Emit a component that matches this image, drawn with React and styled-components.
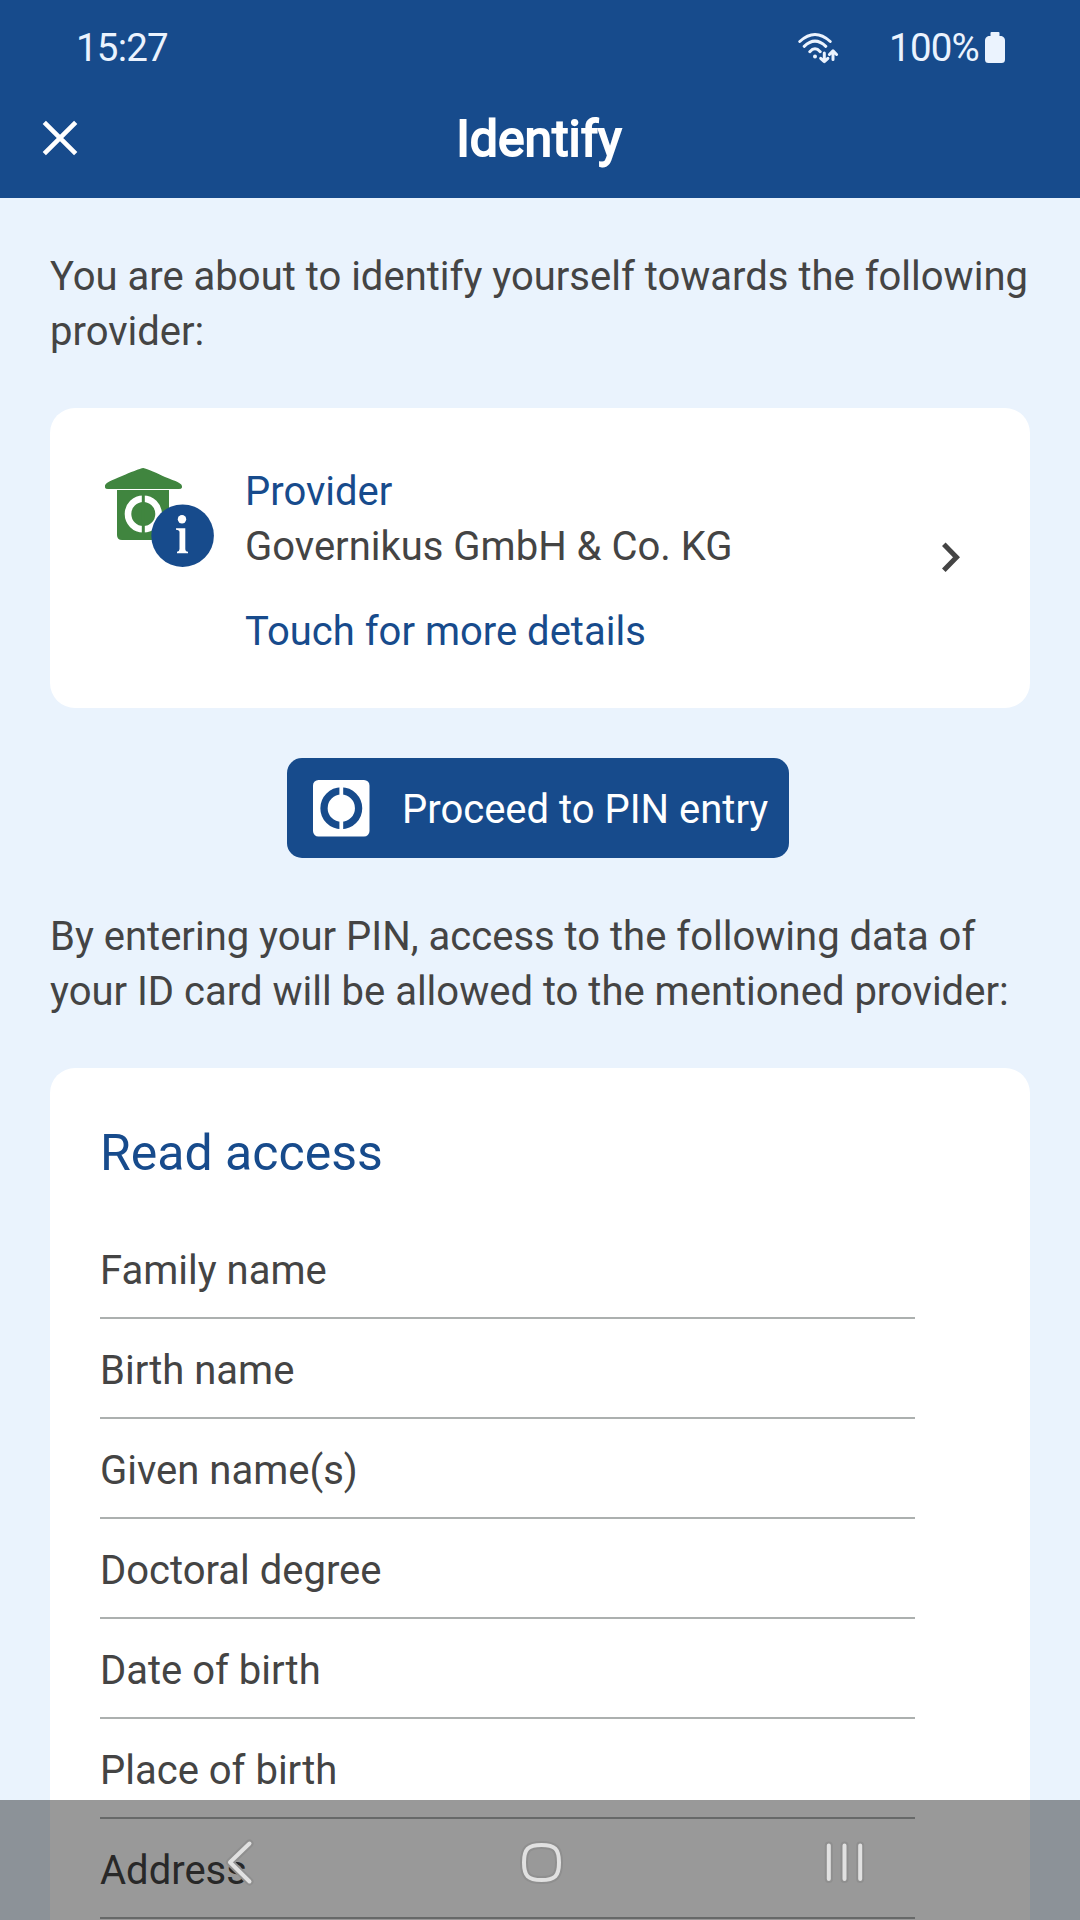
import React from "react";
import styled, { createGlobalStyle } from "styled-components";

const blue = "#174b8c";
const ink = "#444444";

const GlobalStyle = createGlobalStyle`
  * { box-sizing: border-box; }
  body {
    margin: 0;
    font-family: Roboto, "Noto Sans", sans-serif;
    background: #eaf3fd;
    overflow: hidden;
  }
`;

const Screen = styled.div`
  position: relative;
  display: flex;
  flex-direction: column;
  width: 1080px;
  height: 1920px;
  overflow: hidden;
  color: ${ink};
  font-size: 40px;
  line-height: 55px;
`;

const Header = styled.header`
  flex: none;
  height: 198px;
  background: ${blue};
  color: #fff;
`;

const StatusBar = styled.div`
  display: flex;
  align-items: center;
  height: 95px;
  padding: 0 75px 0 76px;
  color: #ebf3fe;
  font-size: 38.5px;
  letter-spacing: -0.8px;
`;

const Clock = styled.span`
  margin-right: auto;
`;

const Percent = styled.span`
  margin-left: 50px;
  margin-right: 6px;
`;

const TitleBar = styled.div`
  display: grid;
  grid-template-columns: 120px 1fr 120px;
  align-items: center;
  height: 86px;
`;

const CloseButton = styled.button`
  display: flex;
  width: 36px;
  height: 36px;
  margin-left: 42px;
  padding: 0;
  border: 0;
  background: none;
`;

const Title = styled.h1`
  margin: 0;
  padding: 2px 2px 0 0;
  text-align: center;
  font-size: 50px;
  font-weight: 400;
  -webkit-text-stroke: 2px #fff;
`;

const Content = styled.main`
  display: flex;
  flex-direction: column;
  flex: 1;
  min-height: 0;
  gap: 50px;
  padding: 50px 50px 0;
`;

const Paragraph = styled.p`
  flex: none;
  height: 110px;
  margin: 0;
  padding-top: 1px;
  white-space: nowrap;
`;

const Card = styled.section`
  flex: none;
  border-radius: 25px;
  background: #fff;
`;

const ProviderCard = styled(Card)`
  display: flex;
  height: 300px;
  padding: 56px 69px 0 50px;
`;

const ProviderIcon = styled.svg`
  flex: none;
  width: 120px;
  height: 110px;
  margin-right: 25px;
`;

const ProviderText = styled.div`
  display: flex;
  flex-direction: column;
  flex: 1;
`;

const Accent = styled.span`
  color: ${blue};
`;

const DetailsLink = styled(Accent)`
  margin-top: 30px;
`;

const Chevron = styled.svg`
  flex: none;
  width: 20px;
  height: 32px;
  margin-top: 77px;
`;

const PinButton = styled.button`
  display: flex;
  flex: none;
  align-self: center;
  align-items: center;
  width: 502px;
  height: 100px;
  margin-right: 4px;
  padding: 0 0 0 26px;
  border: 0;
  border-radius: 15px;
  background: ${blue};
  color: #fff;
  font: inherit;
  white-space: nowrap;
`;

const ButtonIcon = styled.svg`
  flex: none;
  width: 57px;
  height: 57px;
  margin-right: 32px;
`;

const ButtonLabel = styled.span`
  padding-top: 2px;
`;

const AccessCard = styled(Card)`
  padding: 50px 115px 50px 50px;
`;

const CardTitle = styled.h2`
  margin: 0;
  padding: 1px 0 31px;
  color: ${blue};
  font-size: 50px;
  font-weight: 400;
  line-height: 69px;
`;

const AccessList = styled.ul`
  margin: 0;
  padding: 0;
  list-style: none;
`;

const AccessRow = styled.li`
  display: flex;
  align-items: center;
  height: 100px;
  padding-top: 4px;
  border-bottom: 2px solid #acb0af;
`;

const NavBar = styled.nav`
  position: absolute;
  left: 0;
  right: 0;
  bottom: 0;
  height: 120px;
  background: rgba(0, 0, 0, 0.4);
`;

const NavIcons = styled.svg`
  display: block;
  width: 1080px;
  height: 120px;
`;

const fields = [
  "Family name",
  "Birth name",
  "Given name(s)",
  "Doctoral degree",
  "Date of birth",
  "Place of birth",
  "Address",
];

function WifiIcon() {
  return (
    <svg width="42" height="32" viewBox="0 1.5 42 32" fill="none" stroke="#ebf3fe" strokeWidth="3" strokeLinecap="round">
      <path d="M2.800 11Q18 -3 33.200 11M7.200 15.800Q18 5.500 28.800 15.800M12.800 21.200Q18 15.500 23.200 21.200" />
      <circle cx="18" cy="26" r="2" fill="#ebf3fe" stroke="none" />
      <path d="M27.300 22.500V31M23.700 27.800L27.300 31.200L30.900 27.800M36 29V20.500M32.400 24L36 20.400L39.600 24" strokeLinejoin="round" />
    </svg>
  );
}

function BatteryIcon() {
  return (
    <svg width="20" height="31" viewBox="0 0 20 31" fill="#ebf3fe">
      <path d="M6.500 0H13.500Q14.500 0 14.500 1V4H16.500Q20 5 20 8.500V27.500Q20 31 16.500 31H3.500Q0 31 0 27.500V8.500Q0 5 3.500 4H5.500V1Q5.500 0 6.500 0Z" />
    </svg>
  );
}

function ProviderGlyph() {
  return (
    <ProviderIcon viewBox="100 464 120 110">
      <path d="M117 490H169V540H122Q117 540 117 535Z" fill="#40853f" />
      <path d="M105 487.500C104 482 112 480.500 122 476C130 472.500 140 468.500 143.300 468C147 468.500 158 473.500 165 477C176 481.500 183 483 182 487.500Q181.500 489 179 489H108Q105.300 489 105 487.500Z" fill="#40853f" />
      <circle cx="143.300" cy="514" r="15.300" fill="none" stroke="#fff" strokeWidth="6.600" />
      <path d="M143.300 493V535" stroke="#40853f" strokeWidth="3" />
      <circle cx="182.600" cy="535.700" r="31.300" fill={blue} />
      <circle cx="182" cy="519.200" r="4.200" fill="#fff" />
      <path d="M176 528.300H185.300V549Q185.300 551.500 188 551.700V553.200H177V551.700Q179.500 551.500 179.500 549V532Q179.500 530 176 529.700Z" fill="#fff" />
    </ProviderIcon>
  );
}

export default function App() {
  return (
    <>
      <GlobalStyle />
      <Screen>
        <Header>
          <StatusBar>
            <Clock>15:27</Clock>
            <WifiIcon />
            <Percent>100%</Percent>
            <BatteryIcon />
          </StatusBar>
          <TitleBar>
            <CloseButton aria-label="Close">
              <svg width="36" height="36" viewBox="0 0 36 36" stroke="#fff" strokeWidth="4.600">
                <path d="M2.300 2.300L33.700 33.700M33.700 2.300L2.300 33.700" />
              </svg>
            </CloseButton>
            <Title>Identify</Title>
          </TitleBar>
        </Header>
        <Content>
          <Paragraph>
            You are about to identify yourself towards the following
            <br />
            provider:
          </Paragraph>
          <ProviderCard>
            <ProviderGlyph />
            <ProviderText>
              <Accent>Provider</Accent>
              <span>Governikus GmbH &amp; Co. KG</span>
              <DetailsLink>Touch for more details</DetailsLink>
            </ProviderText>
            <Chevron viewBox="0 0 20 32" fill="none" stroke={ink} strokeWidth="5">
              <path d="M2.800 3.300L15.500 16.300L2.800 29.300" />
            </Chevron>
          </ProviderCard>
          <PinButton>
            <ButtonIcon viewBox="0 0 57 57">
              <rect width="56.500" height="56.500" rx="5.500" fill="#fff" />
              <circle cx="28.300" cy="28.200" r="17.300" fill="none" stroke={blue} strokeWidth="7.300" />
              <path d="M28.300 4V52" stroke="#fff" strokeWidth="3.800" />
            </ButtonIcon>
            <ButtonLabel>Proceed to PIN entry</ButtonLabel>
          </PinButton>
          <Paragraph>
            By entering your PIN, access to the following data of
            <br />
            your ID card will be allowed to the mentioned provider:
          </Paragraph>
          <AccessCard>
            <CardTitle>Read access</CardTitle>
            <AccessList>
              {fields.map((f) => (
                <AccessRow key={f}>{f}</AccessRow>
              ))}
            </AccessList>
          </AccessCard>
        </Content>
        <NavBar>
          <NavIcons viewBox="0 0 1080 120" fill="none" strokeLinecap="round" strokeLinejoin="round">
            {[["#8f8f8f", 8], ["#e1e1e1", 4]].map(([color, width]) => (
              <g key={color} stroke={color} strokeWidth={width}>
                <path d="M249.500 43.500L230 62.300L249.500 81.500" />
                <path d="M541.500 45C555 45 559 49 559 62.500C559 76 555 80 541.500 80C528 80 524 76 524 62.500C524 49 528 45 541.500 45Z" />
                <path d="M828.800 45.500V79M844.500 45.500V79M860.200 45.500V79" />
              </g>
            ))}
          </NavIcons>
        </NavBar>
      </Screen>
    </>
  );
}
